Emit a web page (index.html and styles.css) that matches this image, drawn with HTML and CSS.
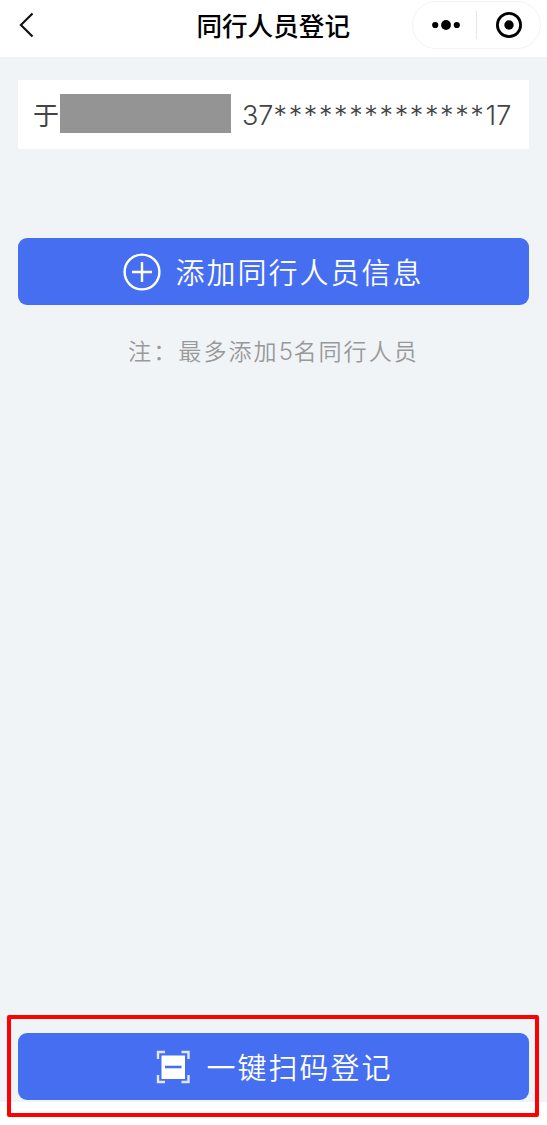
FILE: index.html
```html
<!DOCTYPE html>
<html lang="zh-CN">
<head>
  <meta charset="UTF-8" />
  <meta name="viewport" content="width=device-width, initial-scale=1.0" />
  <title>同行人员登记</title>
  <link rel="stylesheet" href="styles.css">
</head>
<body>

  <header class="navbar">
    <svg class="back" width="18" height="28" viewBox="0 0 18 28">
      <path d="M15 2 L3 14 L15 26" />
    </svg>
    <h1>同行人员登记</h1>
    <div class="capsule">
      <svg class="dots" width="30" height="12" viewBox="0 0 30 12">
        <circle cx="4.2" cy="6" r="3.1" />
        <circle cx="15" cy="6" r="4.9" />
        <circle cx="25.8" cy="6" r="3.1" />
      </svg>
      <span class="line"></span>
      <svg class="close" width="28" height="28" viewBox="0 0 28 28">
        <circle class="ring" cx="14" cy="14" r="11.6" />
        <circle cx="14" cy="14" r="4.7" />
      </svg>
    </div>
  </header>

  <main>
    <!-- 同行人员 -->
    <div class="person">
      <span class="name">于</span>
      <span class="mask"></span>
      <span class="idcard">37<span class="stars">**************</span>17</span>
    </div>

    <button class="btn btn-add">
      <svg width="38" height="38" viewBox="0 0 38 38">
        <circle cx="19" cy="19" r="17.4" />
        <path d="M19 9 V29 M9 19 H29" />
      </svg>
      <span>添加同行人员信息</span>
    </button>
    <p class="note">注：最多添加<span class="num">5</span>名同行人员</p>

    <!-- 扫码登记 -->
    <div class="scan-box">
      <button class="btn btn-scan">
        <svg width="34" height="34" viewBox="0 0 34 34">
          <path class="corner" d="M2 9 V2 H9 M25.5 2 H32.5 V9 M32.5 25 V32 H25.5 M9 32 H2 V25" />
          <rect x="5.5" y="5.5" width="23.5" height="23.5" />
          <path class="bar" d="M9 17 H25.5" />
        </svg>
        <span>一键扫码登记</span>
      </button>
    </div>
  </main>

</body>
</html>
```

FILE: styles.css
```css
* {
  box-sizing: border-box;
}

body {
  margin: 0;
  height: 1125px;
  font-family: "Liberation Sans", "Noto Sans CJK SC", sans-serif;
  background: #fff;
}

.navbar {
  display: flex;
  align-items: center;
  height: 57px;
  padding: 0 6px 7px 18px;
  background: #fff;
}

.back {
  fill: none;
  stroke: #111;
  stroke-width: 2.2;
}

h1 {
  margin: 0 62px 0 161px;
  font-family: "Noto Sans CJK SC", sans-serif;
  font-size: 25.6px;
  font-weight: 500;
  line-height: 50px;
  white-space: nowrap;
  color: #000;
}

.capsule {
  display: flex;
  align-items: center;
  flex: none;
  width: 129px;
  height: 48px;
  padding-left: 18px;
  border: 1px solid #f3f3f3;
  border-radius: 24px;
}

.line {
  width: 1px;
  height: 28px;
  margin: 0 18px 0 15px;
  background: #e6e6e6;
}

.close .ring {
  fill: none;
  stroke: #000;
  stroke-width: 2.8;
}

main {
  display: flex;
  flex-direction: column;
  height: 1045px;
  padding: 23px 7px 0;
  background: #f0f4f7;
}

.person {
  display: flex;
  align-items: center;
  height: 69px;
  margin: 0 11px;
  padding: 0 15px;
  background: #fff;
  color: #444;
}

.name {
  width: 27px;
  margin-top: -3px;
  font-size: 26px;
  font-family: "Noto Sans CJK SC", sans-serif;
}

.mask {
  width: 171px;
  height: 39px;
  margin: -3px 11px 0 0;
  background: #949494;
}

.idcard {
  margin-top: 2px;
  font-family: Inter, sans-serif;
  font-size: 27px;
  font-weight: 350;
  white-space: nowrap;
}

.stars {
  letter-spacing: 1.63px;
}

.btn {
  display: flex;
  align-items: center;
  justify-content: center;
  height: 67px;
  padding: 0;
  border: none;
  border-radius: 9px;
  background: #466ef1;
  color: #fff;
  font-family: "Noto Sans CJK SC", sans-serif;
  font-size: 29px;
  font-weight: 350;
  letter-spacing: 2px;
}

.btn span {
  margin-top: -1px;
}

.btn svg {
  fill: none;
  stroke: #fff;
  stroke-width: 2.4;
}

.btn-add {
  margin: 89px 11px 0;
  gap: 14px;
}

.note {
  margin: 27px 0 0;
  font-family: "Noto Sans CJK SC", sans-serif;
  font-size: 23.1px;
  font-weight: 350;
  line-height: 36px;
  letter-spacing: 2px;
  text-align: center;
  color: #999;
}

.num {
  font-family: Inter, sans-serif;
  font-size: 24px;
  line-height: 1;
  letter-spacing: 0.5px;
}

.scan-box {
  height: 102px;
  margin: auto 1px -15px 0;
  padding: 14px 6px 0 7px;
  border: 4px solid #fe0000;
  border-radius: 2px;
}

.btn-scan {
  width: 100%;
  padding-left: 2px;
  gap: 16px;
}

.btn-scan rect {
  fill: #fff;
  stroke: none;
}

.btn-scan .corner {
  stroke: #dfe6fd;
}

.btn-scan .bar {
  stroke: #466ef1;
  stroke-width: 2.6;
}
```
